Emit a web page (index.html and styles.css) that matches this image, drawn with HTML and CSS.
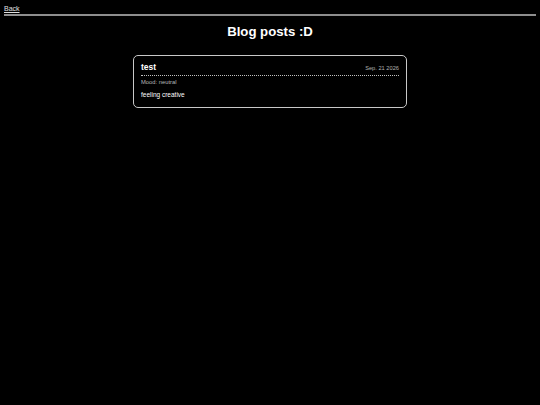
FILE: index.html
```html
<!DOCTYPE html>
<html>
<head>
<meta charset="utf-8">
<link rel="stylesheet" href="styles.css">
</head>
<body>
<nav class="nav"><a class="back" href="#">Back</a></nav>
<hr class="rule">
<h1 class="title">Blog posts :D</h1>
<main class="posts">
  <article class="post">
    <header class="post-head">
      <span class="post-title">test</span>
      <span class="post-date">Sep. 21 2026</span>
    </header>
    <div class="post-mood">Mood: neutral</div>
    <p class="post-body">feeling creative</p>
  </article>
</main>
</body>
</html>
```
FILE: styles.css
```css
html, body { background: #000; }
body {
  margin: 0;
  padding: 1px 4px 3px 4px;
  color: #fff;
  font-family: "Liberation Sans", Arial, sans-serif;
}
.nav { line-height: 10px; height: 10px; }
.back {
  color: #e0e0e0;
  font-size: 7px;
  text-decoration: underline;
}
.rule {
  margin: 3px 0 0 0;
  border: none;
  height: 2px;
  background: #8e8e8e;
}
.title {
  margin: 8px 0 0 0;
  text-align: center;
  font-size: 13.2px;
  line-height: 16px;
  font-weight: bold;
}
.posts {
  display: flex;
  justify-content: center;
  margin-top: 15px;
}
.post {
  width: 258px;
  border: 1px solid #c8c8c8;
  border-radius: 5px;
  padding: 6px 7px 8.5px 7px;
}
.post-head {
  display: flex;
  justify-content: space-between;
  align-items: baseline;
  padding-bottom: 3px;
  border-bottom: 1px dotted #c0c0c0;
}
.post-title { font-weight: bold; font-size: 8.5px; line-height: 10px; }
.post-date { font-size: 5.7px; color: #b0b0b0; }
.post-mood { font-size: 5.8px; color: #b8b8b8; margin-top: 2.5px; line-height: 7px; }
.post-body { font-size: 6.5px; margin: 5px 0 0 0; line-height: 8px; }
```
